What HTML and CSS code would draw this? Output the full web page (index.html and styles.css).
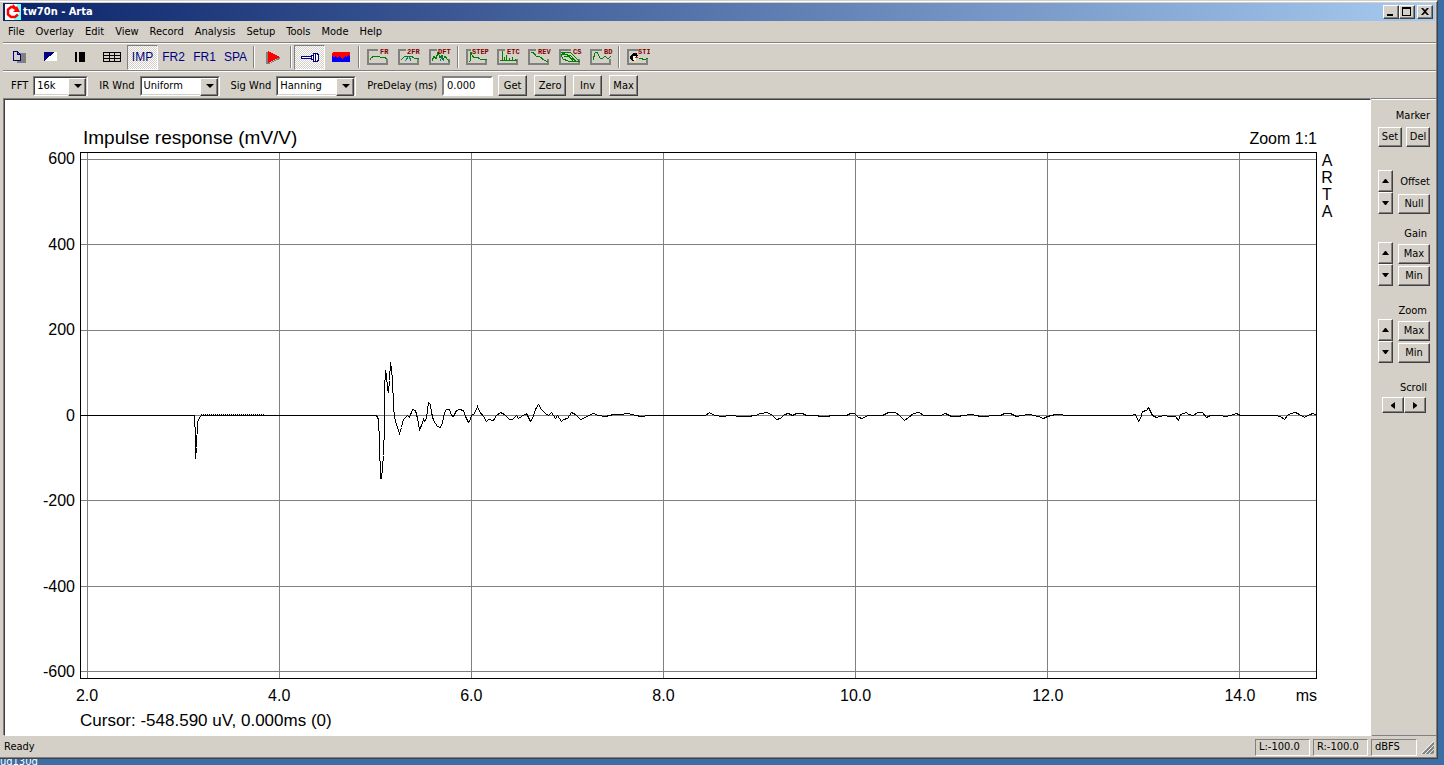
FILE: index.html
```html
<!DOCTYPE html>
<html lang="en">
<head>
    <meta charset="UTF-8">
    <meta name="viewport" content="width=device-width, initial-scale=1.0">
    <title>tw70n - Arta</title>
    <link rel="stylesheet" href="styles.css">
</head>
<body>
    <div class="window">
        <!-- Title bar -->
        <header class="titlebar">
            <svg class="app-icon" width="16" height="16" viewBox="0 0 16 16">
                <path fill="#fff" d="M0 0h16v16H0z"/>
                <path fill="#7ff" d="M12 0h4v16H9v-1l5-4z"/>
                <path fill="none" stroke="#f00" stroke-width="2.500" d="M9 3H6L3 5.500v5L6 13h4l3-2.500"/>
                <path fill="#f00" d="M8 0l3 3 1-1 3 6H8l2-2-3-2z"/>
            </svg>
            <h1>tw70n - Arta</h1>
            <button class="btn caption" aria-label="Minimize"><svg width="12" height="10"><path d="M2 7h6v2H2z"/></svg></button>
            <button class="btn caption" aria-label="Maximize"><svg width="12" height="10"><path fill-rule="evenodd" d="M1 0h9v9H1zM2 2v6h7V2z"/></svg></button>
            <button class="btn caption close" aria-label="Close"><svg width="12" height="10"><path d="M2 1h2l2 2 2-2h2L7 4.500 10 8H8L6 6 4 8H2l3-3.500z"/></svg></button>
        </header>

        <!-- Menu -->
        <nav class="menu">
            <a href="#">File</a>
            <a href="#">Overlay</a>
            <a href="#">Edit</a>
            <a href="#">View</a>
            <a href="#">Record</a>
            <a href="#">Analysis</a>
            <a href="#">Setup</a>
            <a href="#">Tools</a>
            <a href="#">Mode</a>
            <a href="#">Help</a>
        </nav>

        <!-- Toolbar -->
        <div class="toolbar">
            <button class="tool" aria-label="Copy"><svg width="14" height="12"><path fill="#808080" d="M5 2h9v10H5z"/><path fill="#d4d0c8" stroke="#000080" d="M1.500.5h4l3 3v6h-7zM5.500.5v3h3"/></svg></button>
            <button class="tool" aria-label="Colors"><svg width="14" height="12"><path fill="#fff" d="M1 1h13v9H1z"/><path fill="#000080" d="M1 1h11L1 10z"/></svg></button>
            <button class="tool" aria-label="Line width"><svg width="16" height="12"><path d="M2 1h2v10H2zM6 1h6v10H6z"/></svg></button>
            <button class="tool" aria-label="Grid"><svg width="18" height="12"><path fill="none" stroke="#000" d="M.5 1.500h17v9H.5zM0 4.500h18M0 7.500h18M6.500 1v10M11.500 1v10"/></svg></button>
            <button class="tool pressed">IMP</button>
            <button class="tool">FR2</button>
            <button class="tool">FR1</button>
            <button class="tool">SPA</button>
            <span class="sep"></span>
            <button class="tool" aria-label="Record"><svg width="16" height="14"><path fill="#808080" d="M1 2h4v12H1z"/><path fill="#808080" d="M3 14l12-5v-2z"/><path fill="#f00" d="M3 1l12 6-12 6z"/></svg></button>
            <span class="sep"></span>
            <button class="tool pressed" aria-label="Signal generator"><svg width="20" height="10"><path fill="#fff" stroke="#000080" d="M1.500 4.500h10v2h-10z"/><path fill="#000080" d="M1 6h11v1H1z"/><path fill="#fff" stroke="#000080" d="M11.500 3.500h2v-2h4l1 2v4l-1 2h-4v-2h-2zM15.500 2v7M13.500 3v5"/></svg></button>
            <button class="tool" aria-label="Spectrum"><svg width="18" height="10"><path fill="#f00" d="M1 0h16l1 1v8H0V1z"/><path fill="#00f" d="M0 10V4l2 2 1-2 2 2 2-2 1 1 2 2 2-1 1-2 2 2 1-3 2 2v5z"/></svg></button>
            <span class="sep"></span>
            <button class="tool" aria-label="FR"><svg width="24" height="18"><path class="frame" d="M12 1.500H2V16h19v-5"/><path class="curve" d="M4 12v-1l4-3h4l2 1h4l3 2"/><text x="14" y="6">FR</text></svg></button>
            <button class="tool" aria-label="2FR"><svg width="24" height="18"><path class="frame" d="M9 1.500H2V16h19v-5"/><path class="curve" d="M4 12l4-4h6l3 2h5"/><path class="curve blue" d="M8 13l4-5 2 5"/><text x="10" y="6">2FR</text></svg></button>
            <button class="tool" aria-label="DFT"><svg width="24" height="18"><path class="frame" d="M9 1.500H2V16h19v-5"/><path class="curve" d="M4 13l2-5 2 3 2-7 2 6 2-3 1 5 2-4 2 3 3 3"/><path class="curve blue" d="M12 13l2-4 2 4"/><text x="10" y="6">DFT</text></svg></button>
            <span class="sep"></span>
            <button class="tool" aria-label="STEP"><svg width="24" height="18"><path class="frame" d="M6 1.500H2V16h19v-5"/><path class="curve" d="M4 13h1l1-9 1 3 2 3 3-1 3 2h7"/><text x="7" y="6">STEP</text></svg></button>
            <button class="tool" aria-label="ETC"><svg width="24" height="18"><path class="frame" d="M9 1.500H2V16h19v-5"/><path class="curve" d="M4 12.500h17M6.500 3v10M8.500 9v4M10.500 7v6M13.500 10v3M16.500 9v4M19.500 11v2"/><text x="11" y="6">ETC</text></svg></button>
            <button class="tool" aria-label="REV"><svg width="24" height="18"><path class="frame" d="M9 1.500H2V16h19v-5"/><path class="curve" d="M4 4h2l3 4 4 1 4 3 4 2"/><text x="11" y="6">REV</text></svg></button>
            <button class="tool" aria-label="CS"><svg width="24" height="18"><path class="frame" d="M13 1.500H2V16h19v-5"/><path class="curve" d="M3 5l3-1 7 1 8 8H10L5 11 3 7l5-1 9 7M6 9l4-1 5 5M4 5l9 3 5 5"/><text x="15" y="6">CS</text></svg></button>
            <button class="tool" aria-label="BD"><svg width="24" height="18"><path class="frame" d="M13 1.500H2V16h19v-5"/><path class="curve" d="M4 12l2-7 2-1 3 6 2 1 3-3 3 3 3-3"/><text x="15" y="6">BD</text></svg></button>
            <span class="sep"></span>
            <button class="tool" aria-label="STI"><svg width="24" height="18"><path class="frame" d="M12 1.500H2V16h19v-5"/><path d="M5 7l2-2h4l1 3-3 1v3l-3 1-2-3z"/><path fill="#fff" d="M7 8h3v4H7z"/><path fill="#f00" d="M9 9h3v1H9z"/><path fill="#ff0" d="M8 12h2v1H8z"/><path class="curve" d="M13 11l2-1 3 2 4-2"/><text x="12" y="6">STI</text></svg></button>
        </div>

        <!-- Signal settings -->
        <form class="settings">
            <label for="fft">FFT</label>
            <span class="combo combo-small"><select id="fft"><option>16k</option></select></span>
            <label for="irWnd">IR Wnd</label>
            <span class="combo"><select id="irWnd"><option>Uniform</option></select></span>
            <label for="sigWnd">Sig Wnd</label>
            <span class="combo"><select id="sigWnd"><option>Hanning</option></select></span>
            <label for="preDelay">PreDelay (ms)</label>
            <input type="text" id="preDelay" value="0.000">
            <button type="button" class="btn">Get</button>
            <button type="button" class="btn wide">Zero</button>
            <button type="button" class="btn">Inv</button>
            <button type="button" class="btn">Max</button>
        </form>

        <main class="content">
            <!-- Impulse response plot -->
            <section class="plot">
                <div class="plot-head">
                    <h2>Impulse response (mV/V)</h2>
                    <span>Zoom 1:1</span>
                </div>
                <ul class="y-axis">
                    <li>600</li>
                    <li>400</li>
                    <li>200</li>
                    <li>0</li>
                    <li>-200</li>
                    <li>-400</li>
                    <li>-600</li>
                </ul>
                <svg class="graph" viewBox="81 153 1235 525" preserveAspectRatio="none">
                    <path class="grid" d="M81 159.500H1316M81 244.500H1316M81 330.500H1316M81 415.500H1316M81 500.500H1316M81 586.500H1316M81 671.500H1316"/>
                    <path class="grid" d="M87.500 153V678M279.500 153V678M471.500 153V678M663.500 153V678M855.500 153V678M1047.500 153V678M1239.500 153V678"/>
                    <path class="fuzz" d="M201 414.500H264"/>
                    <polyline class="trace" transform="translate(0.5 0.5)" points="80,415 194,415 195,437 195,458 196,447 197,422 199,417 201,415 376,415 378,419 379,441 380,478 381,478 383,455 384,425 384,390 385,370 386,375 387,388 388,392 389,380 390,362 391,368 392,380 393,405 394,417 396,424 399,433 401,427 403,419 407,415 409,417 412,409 415,410 417,418 419,429 421,425 423,419 424,421 426,418 428,402 430,404 431,412 433,420 437,426 440,427 442,422 444,412 446,409 449,409 451,415 453,416 456,410 459,409 463,410 465,416 468,422 470,419 471,415 474,413 477,406 479,411 483,416 486,421 488,419 493,420 496,415 500,412 504,414 509,419 512,419 516,415 518,418 521,416 526,413 530,421 532,418 535,409 538,404 541,409 545,413 548,415 551,412 555,418 557,415 561,421 563,419 567,418 571,412 575,414 580,419 585,417 590,414 593,413 598,415 605,416 613,414 620,414 628,413 635,415 641,416 648,415 705,415 709,412 714,415 722,416 730,415 740,416 747,416 755,415 760,413 767,412 772,415 776,419 780,418 784,414 788,413 792,415 796,413 802,413 806,415 816,415 820,416 826,416 832,415 846,415 850,413 854,413 858,417 862,418 867,415 882,415 888,412 895,412 899,415 904,420 908,417 913,413 919,412 923,415 940,415 945,413 951,416 957,416 963,415 970,414 976,415 980,416 985,416 992,415 1000,415 1004,413 1010,413 1016,416 1021,415 1029,414 1038,416 1043,418 1047,416 1055,414 1070,415 1130,415 1135,414 1138,421 1140,418 1142,411 1146,410 1148,407 1150,411 1152,415 1156,417 1163,415 1170,416 1175,416 1178,420 1180,414 1186,412 1188,414 1193,415 1197,412 1202,412 1206,417 1210,415 1219,415 1225,416 1230,415 1236,413 1240,415 1275,415 1280,416 1284,419 1287,415 1290,413 1295,412 1299,414 1304,417 1309,414 1313,413 1316,415"/>
                </svg>
                <div class="brand"><span>A</span><span>R</span><span>T</span><span>A</span></div>
                <div class="plot-foot">
                    <div class="x-axis">
                        <ul>
                            <li>2.0</li>
                            <li>4.0</li>
                            <li>6.0</li>
                            <li>8.0</li>
                            <li>10.0</li>
                            <li>12.0</li>
                            <li>14.0</li>
                        </ul>
                        <span class="unit">ms</span>
                    </div>
                    <p>Cursor: -548.590 uV, 0.000ms (0)</p>
                </div>
            </section>

            <!-- Side panel -->
            <aside class="panel">
                <div class="group marker">
                    <h3>Marker</h3>
                    <div class="pair">
                        <button class="btn">Set</button>
                        <button class="btn">Del</button>
                    </div>
                </div>
                <div class="group offset">
                    <div class="spin">
                        <button class="btn" aria-label="Offset up"><svg width="7" height="4"><path d="M3 0h1l3 4H0z"/></svg></button>
                        <button class="btn" aria-label="Offset down"><svg width="7" height="4"><path d="M0 0h7L4 4H3z"/></svg></button>
                    </div>
                    <div class="stack">
                        <h3>Offset</h3>
                        <button class="btn">Null</button>
                    </div>
                </div>
                <div class="group titled">
                    <h3>Gain</h3>
                    <div class="spin">
                        <button class="btn" aria-label="Gain up"><svg width="7" height="4"><path d="M3 0h1l3 4H0z"/></svg></button>
                        <button class="btn" aria-label="Gain down"><svg width="7" height="4"><path d="M0 0h7L4 4H3z"/></svg></button>
                    </div>
                    <div class="stack">
                        <button class="btn">Max</button>
                        <button class="btn">Min</button>
                    </div>
                </div>
                <div class="group titled">
                    <h3>Zoom</h3>
                    <div class="spin">
                        <button class="btn" aria-label="Zoom in"><svg width="7" height="4"><path d="M3 0h1l3 4H0z"/></svg></button>
                        <button class="btn" aria-label="Zoom out"><svg width="7" height="4"><path d="M0 0h7L4 4H3z"/></svg></button>
                    </div>
                    <div class="stack">
                        <button class="btn">Max</button>
                        <button class="btn">Min</button>
                    </div>
                </div>
                <div class="group titled scroll">
                    <h3>Scroll</h3>
                    <div class="pair">
                        <button class="btn" aria-label="Scroll left"><svg width="4" height="7"><path d="M4 0v7L0 4V3z"/></svg></button>
                        <button class="btn" aria-label="Scroll right"><svg width="4" height="7"><path d="M0 0l4 3v1L0 7z"/></svg></button>
                    </div>
                </div>
            </aside>
        </main>

        <!-- Status bar -->
        <footer class="status">
            <span class="ready">Ready</span>
            <span class="pane">L:-100.0</span>
            <span class="pane">R:-100.0</span>
            <span class="pane unit-pane">dBFS</span>
            <svg width="14" height="14"><path stroke="#fff" d="M1 14L14 1M5 14l9-9M9 14l5-5"/><path stroke="#808080" stroke-width="2" d="M2 15L15 2M6 15l9-9M10 15l5-5"/></svg>
        </footer>
    </div>
    <div class="desktop">ud130d</div>
</body>
</html>
```

FILE: styles.css
```css
* {
    box-sizing: border-box;
}
body {
    margin: 0;
    height: 100vh;
    display: flex;
    flex-direction: column;
    overflow: hidden;
    background: #3a6ea5;
    font-family: "DejaVu Sans Condensed", "DejaVu Sans", sans-serif;
    font-size: 11px;
    line-height: 14px;
    color: #000;
}
h1, h2, h3, p, ul {
    margin: 0;
    padding: 0;
    font-size: inherit;
    font-weight: normal;
    list-style: none;
}
button, select, input {
    font: inherit;
    color: #000;
    margin: 0;
    padding: 0;
    border-radius: 0;
}
.window {
    position: relative;
    flex: 1;
    min-height: 0;
    display: flex;
    flex-direction: column;
    margin-right: 6px;
    padding: 2px 1px 1px 3px;
    background: #d4d0c8;
    border-top: 1px solid #d4d0c8;
    border-right: 1px solid #404040;
    border-bottom: 1px solid #404040;
    box-shadow: inset 0 1px #fff, inset -1px -1px #808080;
}
.desktop {
    height: 6px;
    line-height: 6px;
    color: #fff;
}
.btn {
    display: flex;
    align-items: center;
    justify-content: center;
    height: 20px;
    background: #d4d0c8;
    border: 1px solid;
    border-color: #fff #404040 #404040 #fff;
    box-shadow: inset -1px -1px #808080;
}

/* Title bar */
.titlebar {
    display: flex;
    align-items: center;
    height: 18px;
    margin-right: 1px;
    padding: 0 2px;
    background: linear-gradient(to right, #0a246a, #a6caf0);
}
.titlebar h1 {
    flex: 1;
    margin-left: 2px;
    color: #fff;
    font-weight: bold;
}
.caption {
    width: 16px;
    height: 14px;
}
.close {
    margin-left: 2px;
}

/* Menu */
.menu {
    display: flex;
    align-items: center;
    height: 22px;
    border-bottom: 1px solid #808080;
}
.menu a {
    padding: 0 6px 0 5px;
    color: #000;
    text-decoration: none;
}

/* Toolbar */
.toolbar {
    display: flex;
    align-items: center;
    height: 28px;
    border-top: 1px solid #fff;
    border-bottom: 1px solid #808080;
}
.tool {
    display: flex;
    align-items: center;
    justify-content: center;
    width: 31px;
    height: 25px;
    background: none;
    border: 1px solid transparent;
    color: #000080;
    font-family: "Liberation Sans", Arial, sans-serif;
    font-size: 12px;
}
.tool.pressed {
    border-color: #808080 #fff #fff #808080;
    background: repeating-conic-gradient(#fff 0 25%, #d4d0c8 0 50%) 0 0 / 2px 2px;
}
.tool svg {
    shape-rendering: crispEdges;
}
.tool text {
    font: bold 7px "Liberation Mono", monospace;
    fill: #800000;
}
.frame {
    fill: none;
    stroke: #808080;
    stroke-width: 2;
}
.curve {
    fill: none;
    stroke: #008000;
}
.blue {
    stroke: #008080;
}
.sep {
    width: 2px;
    height: 22px;
    margin: 0 2px;
    border-left: 1px solid #808080;
    border-right: 1px solid #fff;
}

/* Signal settings */
.settings {
    display: flex;
    align-items: center;
    height: 28px;
    padding-left: 8px;
    border-top: 1px solid #fff;
}
.settings label {
    margin-right: 5px;
}
.combo {
    position: relative;
    width: 80px;
    height: 20px;
    margin-right: 11px;
    border: 1px solid;
    border-color: #808080 #fff #fff #808080;
    background: #fff;
}
.combo-small {
    width: 55px;
}
.combo select {
    width: 100%;
    height: 18px;
    padding-left: 2px;
    appearance: none;
    border: 1px solid;
    border-color: #404040 #d4d0c8 #d4d0c8 #404040;
    background: #fff;
}
.combo::before {
    content: "";
    position: absolute;
    top: 1px;
    right: 1px;
    width: 16px;
    height: 16px;
    background: #d4d0c8;
    border: 1px solid;
    border-color: #fff #404040 #404040 #fff;
    box-shadow: inset -1px -1px #808080;
    pointer-events: none;
}
.combo::after {
    content: "";
    position: absolute;
    top: 7px;
    right: 5px;
    border: 4px solid transparent;
    border-top-color: #000;
    border-bottom: 0;
    pointer-events: none;
}
.settings input {
    width: 51px;
    height: 20px;
    margin-right: 5px;
    padding-left: 3px;
    border: 2px solid;
    border-color: #808080 #fff #fff #808080;
    background: #fff;
}
.settings .btn {
    width: 29px;
    height: 21px;
    margin-right: 7px;
}
.settings .wide {
    width: 32px;
}

/* Plot */
.content {
    flex: 1;
    min-height: 0;
    display: flex;
    padding-left: 1px;
}
.plot {
    flex: 1;
    display: grid;
    grid-template-columns: 75px 1fr 53px;
    grid-template-rows: 52px 1fr 56px;
    border: 1px solid;
    border-color: #404040 #fff #fff #404040;
    box-shadow: -1px -1px #808080;
    background: #fff;
    font-family: "Liberation Sans", Arial, sans-serif;
    font-size: 16px;
    line-height: 18px;
}
.plot-head {
    grid-column: 2;
    grid-row: 1;
    display: flex;
    justify-content: space-between;
    align-items: flex-end;
    padding: 0 0 4px 3px;
}
.plot-head h2 {
    font-size: 19px;
    line-height: 20px;
}
.y-axis {
    grid-column: 1;
    grid-row: 2;
    display: flex;
    flex-direction: column;
    justify-content: space-between;
    margin: -2px 5px -2px 0;
    text-align: right;
}
.graph {
    grid-column: 2;
    grid-row: 2;
    width: 100%;
    height: 100%;
    min-height: 0;
    border: 1px solid #000;
    shape-rendering: crispEdges;
}
.grid {
    fill: none;
    stroke: #808080;
}
.trace {
    fill: none;
    stroke: #000;
}
.fuzz {
    stroke: #000;
    stroke-dasharray: 1 1;
}
.brand {
    grid-column: 3;
    grid-row: 2;
    display: flex;
    flex-direction: column;
    align-items: center;
    width: 20px;
    line-height: 17px;
}
.plot-foot {
    grid-column: 2;
    grid-row: 3;
    padding-top: 8px;
}
.plot-foot p {
    margin-top: 7px;
    font-size: 17px;
}
.x-axis {
    display: flex;
}
.x-axis ul {
    flex: 1;
    display: flex;
    justify-content: space-between;
    margin-left: 7px;
}
.x-axis li {
    display: flex;
    justify-content: center;
    width: 0;
}
.unit {
    width: 77px;
    text-align: right;
}

/* Side panel */
.panel {
    width: 65px;
    padding: 9px 6px 0;
    border-top: 1px solid #fff;
    border-left: 1px solid #d4d0c8;
    box-shadow: 0 -1px #808080, inset 0 -1px #808080;
}
.group {
    display: flex;
    flex-wrap: wrap;
    justify-content: space-between;
    margin-bottom: 13px;
}
.marker {
    margin-bottom: 23px;
}
.group h3 {
    text-align: right;
}
.marker h3, .titled h3 {
    width: 100%;
}
.titled h3 {
    margin-bottom: 1px;
    padding-right: 3px;
}
.titled {
    margin-bottom: 18px;
}
.pair {
    flex: 1;
    display: flex;
    justify-content: space-between;
    margin-top: 4px;
}
.pair .btn {
    width: 24px;
}
.spin .btn {
    width: 15px;
    height: 22px;
}
.stack {
    display: flex;
    flex-direction: column;
    justify-content: space-between;
    width: 32px;
    padding-top: 2px;
}
.offset .stack {
    padding-top: 5px;
}
.scroll .pair {
    justify-content: center;
    margin-top: 1px;
}
.scroll .btn {
    width: 22px;
    height: 16px;
}

/* Status bar */
.status {
    display: flex;
    align-items: center;
    height: 21px;
    padding: 1px 2px 0 1px;
    gap: 3px;
}
.ready {
    flex: 1;
}
.pane {
    width: 55px;
    height: 17px;
    padding-left: 3px;
    border: 1px solid;
    border-color: #808080 #fff #fff #808080;
}
.unit-pane {
    width: 46px;
}
```
